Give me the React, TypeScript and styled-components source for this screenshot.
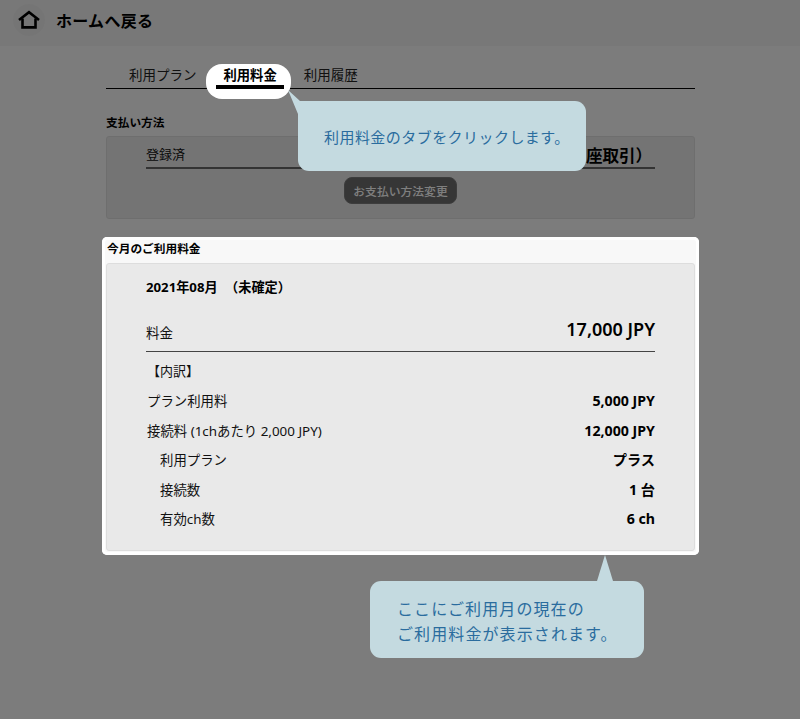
import React from "react";
import styled, { createGlobalStyle } from "styled-components";

const Global = createGlobalStyle`
  html, body { margin: 0; padding: 0; background: #f8f8f8; }
  body { font-family: "Noto Sans", "Noto Sans CJK JP", sans-serif; color: #111; }
`;

const Page = styled.div`
  position: relative;
  width: 800px;
  height: 719px;
  overflow: hidden;
  background: #f8f8f8;
`;

const Header = styled.header`
  display: flex;
  align-items: center;
  height: 46px;
  box-sizing: border-box;
  padding: 0 0 6px 13px;
  gap: 11px;
  background: #f1f1f1;
`;

const HomeButton = styled.span`
  display: flex;
  align-items: center;
  justify-content: center;
  width: 32px;
  height: 32px;
  border-radius: 50%;
  background: #ebebeb;
`;

const HeaderTitle = styled.span`
  font-size: 16px;
  letter-spacing: 0.3px;
  font-weight: 700;
  color: #000;
`;

const Main = styled.main`
  width: 589px;
  margin-left: 106px;
`;

const Tabs = styled.nav`
  display: flex;
  gap: 27px;
  height: 42px;
  align-items: flex-end;
  padding-left: 23px;
  border-bottom: 1px solid #000;
`;

const Tab = styled.span<{ $active?: boolean }>`
  position: relative;
  height: 24px;
  font-size: ${(p) => (p.$active ? "13.3px" : "13.5px")};
  line-height: 22px;
  font-weight: ${(p) => (p.$active ? 700 : 400)};
  color: ${(p) => (p.$active ? "#000" : "#222")};
  ${(p) =>
    p.$active &&
    `
    z-index: 3;
    &::before {
      content: "";
      position: absolute;
      z-index: -1;
      left: -18px;
      right: -14px;
      top: 0;
      height: 35px;
      border-radius: 16px;
      background: #fff;
    }
    &::after {
      content: "";
      position: absolute;
      left: -8px;
      right: -7px;
      bottom: -1px;
      height: 4px;
      background: #000;
    }
  `}
`;

const SectionTitle = styled.h2`
  margin: 0;
  font-size: 11.7px;
  line-height: 16px;
  font-weight: 700;
  color: #000;
`;

const PaymentSection = styled.section`
  padding: 25px 0 0 1px;
  margin-left: -1px;
  ${SectionTitle} { margin-bottom: 6px; }
`;

const PaymentPanel = styled.div`
  height: 81px;
  border: 1px solid #ddd;
  border-radius: 3px;
  background: #e9e9e9;
  padding: 0 39px;
`;

const PaymentRow = styled.div`
  display: flex;
  justify-content: space-between;
  align-items: flex-start;
  height: 30px;
  border-bottom: 2px solid #666;
  font-size: 13px;
  line-height: 34px;
`;

const PaymentValue = styled.span`
  font-size: 16.5px;
  line-height: 38px;
  font-weight: 700;
  margin-right: 3px;
  color: #000;
`;

const ChangeButtonRow = styled.div`
  display: flex;
  justify-content: center;
  padding-top: 8px;
`;

const ChangeButton = styled.button`
  width: 113px;
  height: 27px;
  padding: 0;
  border: 1px solid #7a7a7a;
  border-radius: 8px;
  background: #6c6c6c;
  color: #fff;
  font: 500 11.8px "Noto Sans", "Noto Sans CJK JP", sans-serif;
`;

const FeeCard = styled.section`
  position: relative;
  z-index: 3;
  margin: 18px -4px 0;
  padding: 4px;
  background: #f8f8f8;
  border-radius: 5px;
  box-shadow: inset 0 0 0 3px #fff;
  ${SectionTitle} { height: 22px; margin-left: 1px; line-height: 15px; }
`;

const FeePanel = styled.div`
  height: 288px;
  box-sizing: border-box;
  border: 1px solid #ddd;
  border-radius: 3px;
  background: #e9e9e9;
  padding: 13px 39px 0 39px;
`;

const Month = styled.div`
  font-size: 13.2px;
  font-weight: 700;
  line-height: 20px;
  height: 29px;
  word-spacing: 4px;
  color: #000;
`;

const TotalRow = styled.div`
  display: flex;
  justify-content: space-between;
  align-items: flex-end;
  height: 36px;
  padding: 0 0 8px;
  margin-top: 1px;
  border-bottom: 1px solid #444;
  font-size: 13.5px;
  line-height: 20px;
`;

const TotalValue = styled.strong`
  font-size: 18px;
  font-weight: 600;
  line-height: 26px;
  position: relative;
  top: -1px;
  color: #000;
`;

const Breakdown = styled.div`
  font-size: 13px;
  line-height: 20px;
  height: 30px;
  padding: 9px 0 0 1px;
`;

const Row = styled.div<{ $indent?: boolean }>`
  display: flex;
  justify-content: space-between;
  height: 29.6px;
  line-height: 20px;
  font-size: 13.4px;
  padding-left: ${(p) => (p.$indent ? "14px" : "1px")};
  strong { font-weight: 700; color: #000; font-size: 14.2px; }
`;

const Overlay = styled.div`
  position: absolute;
  inset: 0;
  z-index: 2;
  background: rgba(0, 0, 0, 0.5);
`;

const Callout = styled.div<{ $left: number; $top: number; $width: number; $height: number }>`
  position: absolute;
  z-index: 4;
  left: ${(p) => p.$left}px;
  top: ${(p) => p.$top}px;
  width: ${(p) => p.$width}px;
  height: ${(p) => p.$height}px;
  box-sizing: border-box;
  border-radius: 11px;
  background: #c4dae0;
  color: #2a6c9e;
  font-family: "Noto Sans CJK JP", "Noto Sans", sans-serif;
  font-weight: 400;
`;

const CalloutOne = styled(Callout)`
  padding: 23px 0 0 26px;
  font-size: 15px;
  line-height: 26px;
  letter-spacing: 0.45px;
  white-space: nowrap;
`;

const CalloutTwo = styled(Callout)`
  padding: 15px 0 0 27px;
  font-size: 16px;
  line-height: 25px;
  letter-spacing: 1.1px;
`;

const Tail = styled.svg<{ $left: number; $top: number }>`
  position: absolute;
  display: block;
  left: ${(p) => p.$left}px;
  top: ${(p) => p.$top}px;
  overflow: visible;
`;

export default function App() {
  return (
    <Page>
      <Global />
      <Header>
        <HomeButton>
          <svg width="22" height="20" viewBox="0 0 22 20" fill="none" stroke="#000" strokeWidth="2.6">
            <path d="M1 10 L11 2.2 L21 10" />
            <path d="M4.5 8.5 V17.4 H17.5 V8.5" />
          </svg>
        </HomeButton>
        <HeaderTitle>ホームへ戻る</HeaderTitle>
      </Header>
      <Main>
        <Tabs>
          <Tab>利用プラン</Tab>
          <Tab $active>利用料金</Tab>
          <Tab>利用履歴</Tab>
        </Tabs>
        <PaymentSection>
          <SectionTitle>支払い方法</SectionTitle>
          <PaymentPanel>
            <PaymentRow>
              <span>登録済</span>
              <PaymentValue>（口座取引）</PaymentValue>
            </PaymentRow>
            <ChangeButtonRow>
              <ChangeButton type="button">お支払い方法変更</ChangeButton>
            </ChangeButtonRow>
          </PaymentPanel>
        </PaymentSection>
        <FeeCard>
          <SectionTitle>今月のご利用料金</SectionTitle>
          <FeePanel>
            <Month>2021年08月 （未確定）</Month>
            <TotalRow>
              <span>料金</span>
              <TotalValue>17,000 JPY</TotalValue>
            </TotalRow>
            <Breakdown>【内訳】</Breakdown>
            <Row><span>プラン利用料</span><strong>5,000 JPY</strong></Row>
            <Row><span>接続料 (1chあたり 2,000 JPY)</span><strong>12,000 JPY</strong></Row>
            <Row $indent><span>利用プラン</span><strong>プラス</strong></Row>
            <Row $indent><span>接続数</span><strong>1 台</strong></Row>
            <Row $indent><span>有効ch数</span><strong>6 ch</strong></Row>
          </FeePanel>
        </FeeCard>
      </Main>
      <Overlay />
      <CalloutOne $left={298} $top={101} $width={288} $height={70}>
        利用料金のタブをクリックします。
        <Tail $left={-10} $top={-11} width="40" height="40">
          <polygon points="0,0 10,24 24,11 12,11" fill="#c4dae0" />
        </Tail>
      </CalloutOne>
      <CalloutTwo $left={370} $top={581} $width={274} $height={77}>
        ここにご利用月の現在の
        <br />
        ご利用料金が表示されます。
        <Tail $left={226} $top={-26} width="18" height="27">
          <polygon points="9,0 1,26 17,26" fill="#c4dae0" />
        </Tail>
      </CalloutTwo>
    </Page>
  );
}
